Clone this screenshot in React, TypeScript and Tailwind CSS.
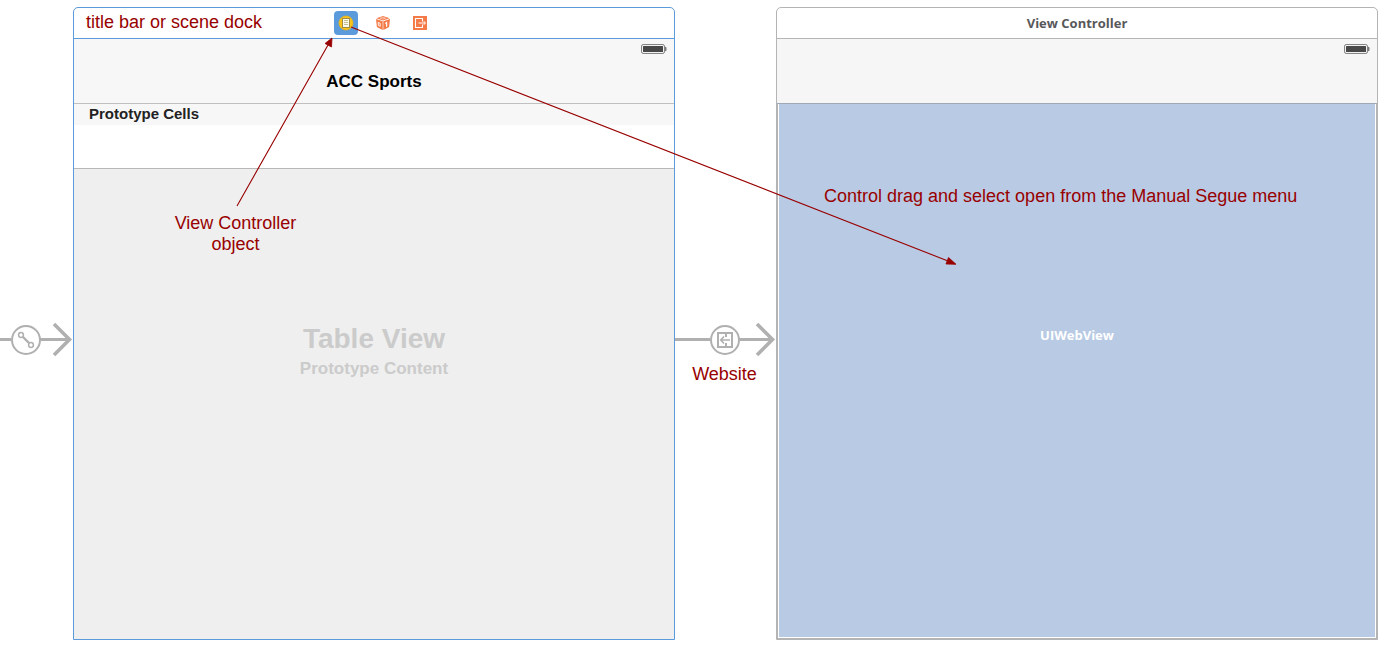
import type { ReactNode } from "react";

function Battery() {
  return (
    <svg width="26" height="12" viewBox="0 0 26 12" role="img" aria-label="Battery full">
      <rect x="0.6" y="1.6" width="22.8" height="8.8" rx="1.5" fill="#fff" stroke="#777" />
      <rect x="2" y="3" width="20" height="6" rx="0.5" fill="#484848" />
      <path d="M24.5 4v4h0.4q0.6-2 0-4z" fill="#666" stroke="#666" strokeWidth="0.6" />
    </svg>
  );
}

function DockButton({ label, selected, children }: { label: string; selected?: boolean; children: ReactNode }) {
  return (
    <button
      type="button"
      aria-label={label}
      className={
        selected
          ? "flex size-6 items-center justify-center rounded bg-[#5b9bdb]"
          : "flex size-6 items-center justify-center rounded"
      }
    >
      {children}
    </button>
  );
}

function ControllerIcon() {
  return (
    <svg width="16" height="16" viewBox="0 0 16 16">
      <circle cx="8" cy="8" r="7" fill="#fcc419" stroke="#e8b320" strokeWidth="0.8" />
      <rect x="4.5" y="3.5" width="7" height="9" fill="#fffbea" stroke="#a08a45" />
      <path d="M6 5.5h4M6 7.5h4M6 9.5h4" stroke="#c0b68c" strokeWidth="0.9" />
    </svg>
  );
}

function ResponderIcon() {
  return (
    <svg width="16" height="16" viewBox="0 0 16 16">
      <path d="M8 1 14.6 3.2 8 5.6 1.4 3.2z" fill="#f47a48" />
      <path d="M1 4 7.7 6.3V15L1.9 12z" fill="#f47a48" />
      <path d="M15 4 8.3 6.3V15l5.8-3z" fill="#f47a48" />
      <path d="M5.2 3.2l2.6-0.8 2.8 0.8-2.7 0.9z" fill="none" stroke="#fff" strokeWidth="0.5" />
      <path d="M3.2 7.4l2 0.8v3.1L3.4 10.4z" fill="none" stroke="#fff" strokeWidth="0.9" />
      <path d="M10.3 8.6l1.3-1v4.2" fill="none" stroke="#fff" strokeWidth="1.2" />
    </svg>
  );
}

function ExitIcon() {
  return (
    <svg width="14" height="14" viewBox="0 0 14 14">
      <rect width="14" height="14" fill="#f47a48" />
      <path d="M9.5 5.5v-3h-7v9h7v-3" fill="none" stroke="#fff" strokeWidth="1.1" />
      <path d="M5.5 7H12M10.8 5.2 12.5 7l-1.7 1.8" fill="none" stroke="#fff" />
    </svg>
  );
}

function SegueArrow({ length, children }: { length: "entry" | "link"; children: ReactNode }) {
  const shift = length === "entry" ? 0 : 4;
  const width = 62 + shift;
  return (
    <div className="flex items-center">
      <span className={length === "entry" ? "h-[3px] w-[11px] bg-[#b0b0b0]" : "h-[3px] w-[35px] bg-[#b0b0b0]"} />
      <svg width={width} height="35" viewBox={`0 0 ${width} 35`} fill="none" stroke="#b0b0b0" className="shrink-0">
        <path d={`M29 17.5H${58 + shift}`} strokeWidth="3" />
        <path d={`M${43 + shift} 2 ${58.5 + shift} 17.5 ${43 + shift} 33`} strokeWidth="3.6" />
        <circle cx="15" cy="18" r="14" strokeWidth="2" fill="#fff" />
        {children}
      </svg>
    </div>
  );
}

export default function App() {
  return (
    <main className="relative flex min-h-screen overflow-hidden bg-white pt-[7px] pr-[6px] pb-[6px] font-['Liberation_Sans',Arial,sans-serif]">
      <div className="w-[73px] shrink-0 pt-[315px]">
        <SegueArrow length="entry">
          <circle cx="10" cy="13" r="2.4" strokeWidth="1.5" />
          <circle cx="20" cy="23" r="2.4" strokeWidth="1.5" />
          <path d="M12 15l6 6" strokeWidth="2.4" />
        </SegueArrow>
      </div>

      <section className="flex min-w-0 flex-1 flex-col overflow-hidden rounded-t-[5px] border border-[#5b9bdb]">
        <header className="grid h-[31px] grid-cols-[1fr_auto_1fr] items-center border-b border-[#5b9bdb]">
          <p className="pb-0.5 pl-3 text-lg leading-7 whitespace-nowrap text-[#980000]">title bar or scene dock</p>
          <div className="flex gap-[13px] pl-[18px]">
            <DockButton label="View Controller" selected>
              <ControllerIcon />
            </DockButton>
            <DockButton label="First Responder">
              <ResponderIcon />
            </DockButton>
            <DockButton label="Exit">
              <ExitIcon />
            </DockButton>
          </div>
        </header>
        <div className="flex h-[65px] flex-col border-b border-[#c0c0c0] bg-[#f7f7f7]">
          <div className="flex justify-end pt-1 pr-[7px]">
            <Battery />
          </div>
          <h1 className="pt-4 text-center text-[17px] leading-[22px] font-bold text-black">ACC Sports</h1>
        </div>
        <h2 className="h-[21px] bg-[#f7f7f7] pl-[15px] text-[15px] leading-5 font-bold text-[#222]">Prototype Cells</h2>
        <div className="h-11 border-b border-[#b8b8b8] bg-white" />
        <div className="flex-1 bg-[#efefef] text-center font-bold text-[#cbcbcb]">
          <p className="pt-[154px] text-[28px] leading-8">Table View</p>
          <p className="pt-1 text-[17px] leading-5">Prototype Content</p>
        </div>
      </section>

      <div className="w-[101px] shrink-0 pt-[315px]">
        <SegueArrow length="link">
          <rect x="8" y="11" width="14" height="14" strokeWidth="2" />
          <path d="M16 11v4M16 21v4" strokeWidth="2" />
          <path d="M20 18H11M14 14.5 10.8 18l3.2 3.5" strokeWidth="1.7" />
        </SegueArrow>
        <p className="pt-[5px] pr-0.5 text-center text-lg leading-6 text-[#980000]">Website</p>
      </div>

      <section className="flex min-w-0 flex-1 flex-col overflow-hidden rounded-t-[5px] border border-[#b4b4b4]">
        <header className="h-[31px] border-b border-[#b4b4b4] text-center font-['Open_Sans',sans-serif] text-[13px] leading-[30px] font-bold text-[#58585a]">
          View Controller
        </header>
        <div className="flex h-[65px] justify-end border-b border-[#a0a8b4] bg-[#f6f6f6] pt-1 pr-[7px]">
          <Battery />
        </div>
        <div className="flex flex-1 border-r border-b border-l border-[#b4b4b4]">
          <div className="flex-1 border-r border-b border-l border-white bg-[#b9cae4] pt-[221px] text-center font-['Open_Sans',sans-serif] text-[13px] leading-5 font-bold text-white">
            UIWebView
          </div>
        </div>
      </section>

      <div className="pointer-events-none absolute inset-0 text-lg leading-[21px] text-[#980000]">
        <svg width="1384" height="646" viewBox="0 0 1384 646" className="absolute top-0 left-0" fill="#980000" stroke="#980000">
          <path d="M237 206 328 45M351 27 948 261" fill="none" strokeWidth="1.1" />
          <path d="M332 38 331.5 47 325 43.5z" strokeWidth="0.8" />
          <path d="M956 264.3 948.5 257.5 946 264z" strokeWidth="0.8" />
        </svg>
        <p className="absolute top-[213px] left-[165px] w-[141px] text-center">
          View Controller
          <br />
          object
        </p>
        <p className="absolute top-[186px] left-[824px] whitespace-nowrap">
          Control drag and select open from the Manual Segue menu
        </p>
      </div>
    </main>
  );
}
